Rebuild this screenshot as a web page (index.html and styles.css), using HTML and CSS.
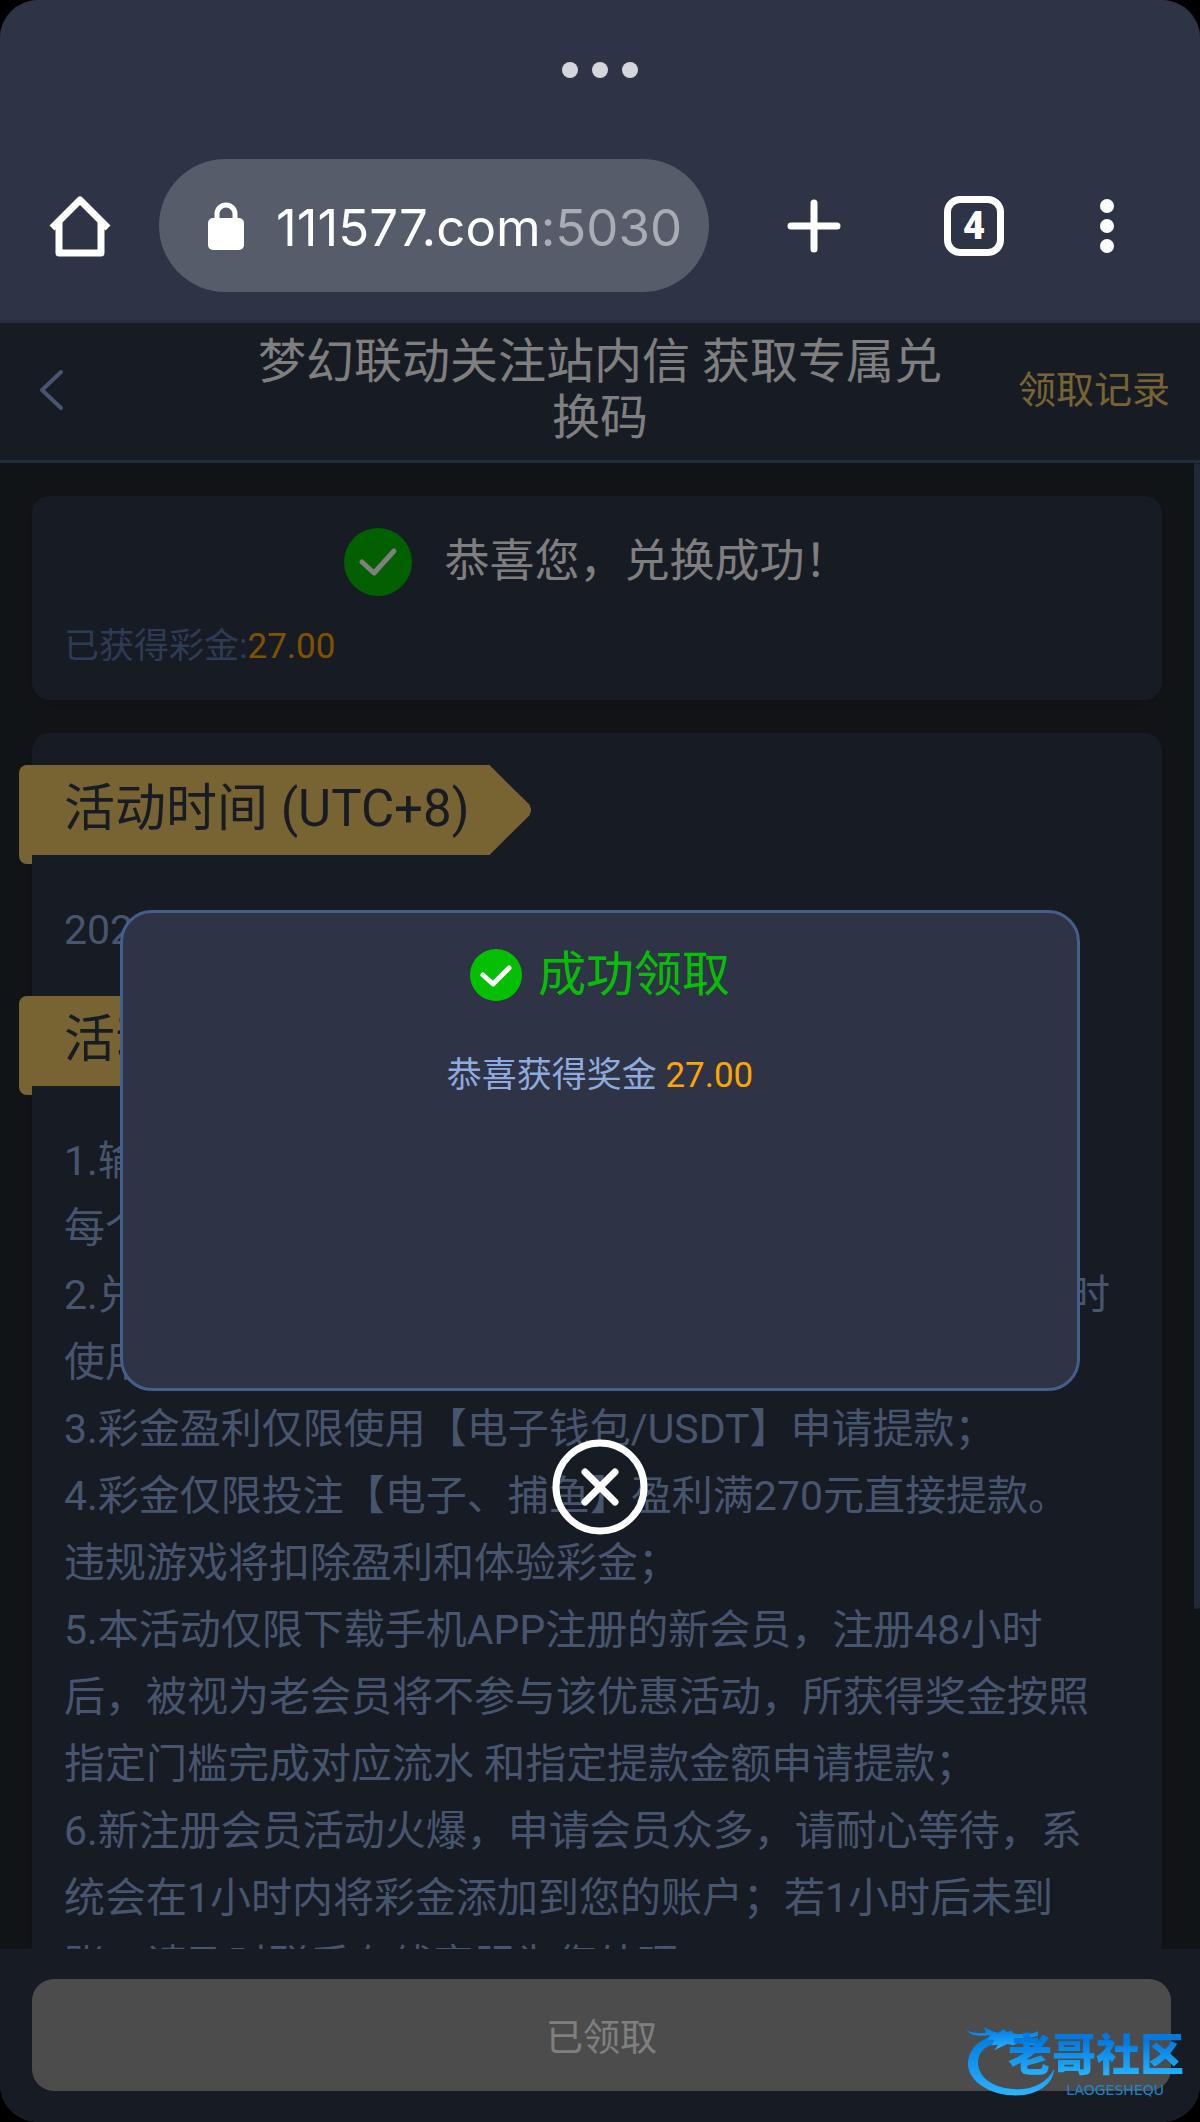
FILE: index.html
```html
<!DOCTYPE html>
<html lang="zh-CN">
<head>
    <meta charset="UTF-8">
    <meta name="viewport" content="width=device-width, initial-scale=1.0">
    <title>梦幻联动关注站内信</title>
    <link rel="stylesheet" href="styles.css">
</head>
<body>
    <div class="screen">
        <!-- browser toolbar -->
        <div class="browser">
            <div class="status-dots"><span></span><span></span><span></span></div>
            <div class="toolbar">
                <button class="icon-button home" aria-label="主页">
                    <svg width="64" height="68" viewBox="0 0 64 68" fill="none" stroke="#fff" stroke-width="7" stroke-linejoin="round" stroke-linecap="butt">
                        <path d="M4 36 L32 8 L60 36"/>
                        <path d="M11 30 V61 H53 V30"/>
                    </svg>
                </button>
                <a class="address" href="#">
                    <svg width="36" height="50" viewBox="0 0 36 50">
                        <path d="M9 20 V13 a9 9 0 0 1 18 0 V20" fill="none" stroke="#fff" stroke-width="5"/>
                        <rect x="0" y="17" width="36" height="32" rx="5" fill="#fff"/>
                    </svg>
                    <span class="url">111577.com<span class="port">:5030</span></span>
                </a>
                <div class="tools">
                    <button class="icon-button" aria-label="新标签页">
                        <svg width="54" height="54" viewBox="0 0 54 54" stroke="#fff" stroke-width="7" stroke-linecap="round">
                            <path d="M27 4 V50 M4 27 H50"/>
                        </svg>
                    </button>
                    <button class="tab-count" aria-label="标签页">4</button>
                    <button class="icon-button" aria-label="菜单">
                        <svg width="16" height="54" viewBox="0 0 16 54" fill="#fff">
                            <circle cx="8" cy="7" r="7"/>
                            <circle cx="8" cy="27" r="7"/>
                            <circle cx="8" cy="47" r="7"/>
                        </svg>
                    </button>
                </div>
            </div>
        </div>

        <div class="page">
            <header class="header">
                <button class="icon-button back" aria-label="返回">
                    <svg width="26" height="42" viewBox="0 0 26 42" fill="none" stroke="#8eaade" stroke-width="4" stroke-linecap="round" stroke-linejoin="round">
                        <path d="M23 3 L4 21 L23 39"/>
                    </svg>
                </button>
                <h1>梦幻联动关注站内信 获取专属兑换码</h1>
                <a class="record" href="#">领取记录</a>
            </header>

            <div class="content">
                <main class="list">
                    <section class="card result">
                        <div class="result-title">
                            <svg width="68" height="68" viewBox="0 0 68 68">
                                <circle cx="34" cy="34" r="34" fill="#04c002"/>
                                <path d="M18 34 L30 45 L50 23" fill="none" stroke="#fff" stroke-width="5" stroke-linecap="round" stroke-linejoin="round"/>
                            </svg>
                            <span>恭喜您，兑换成功！</span>
                        </div>
                        <p>已获得彩金:<span class="amount">27.00</span></p>
                    </section>

                    <section class="card rules">
                        <h2 class="ribbon">活动时间 (UTC+8)</h2>
                        <p>2024/01/01 00:00:00 ~ 2024/12/31 23:59:59</p>
                        <h2 class="ribbon">活动规则说明</h2>
                        <p>
                            1.输入兑换码即可领取专属彩金，<br>
                            每个会员仅限领取一次；<br>
                            2.兑换成功后彩金可在游戏大厅中查看，有效期为168小时使用，逾期自动失效；<br>
                            3.彩金盈利仅限使用【电子钱包/USDT】申请提款；<br>
                            4.彩金仅限投注【电子、捕鱼】盈利满270元直接提款。<br>
                            违规游戏将扣除盈利和体验彩金；<br>
                            5.本活动仅限下载手机APP注册的新会员，注册48小时后，被视为老会员将不参与该优惠活动，所获得奖金按照指定门槛完成对应流水 和指定提款金额申请提款；<br>
                            6.新注册会员活动火爆，申请会员众多，请耐心等待，系统会在1小时内将彩金添加到您的账户；若1小时后未到账，请及时联系在线客服为您处理。
                        </p>
                    </section>
                </main>
                <div class="scrollbar"></div>
            </div>

            <footer class="footer">
                <button class="claim">已领取</button>
            </footer>

            <!-- success dialog -->
            <div class="overlay">
                <div class="dialog" role="dialog">
                    <div class="dialog-title">
                        <svg width="52" height="52" viewBox="0 0 52 52">
                            <circle cx="26" cy="26" r="26" fill="#05c002"/>
                            <path d="M13 26 L23 35 L39 19" fill="none" stroke="#fff" stroke-width="5" stroke-linecap="round" stroke-linejoin="round"/>
                        </svg>
                        <span>成功领取</span>
                    </div>
                    <p>恭喜获得奖金 <span class="amount">27.00</span></p>
                </div>
                <button class="icon-button" aria-label="关闭">
                    <svg width="96" height="96" viewBox="0 0 96 96" fill="none" stroke="#fff" stroke-width="7" stroke-linecap="round">
                        <circle cx="48" cy="48" r="44"/>
                        <path d="M33 33 L63 63 M63 33 L33 63"/>
                    </svg>
                </button>
            </div>
        </div>

        <div class="watermark">
            <svg width="94" height="78" viewBox="0 0 282 234">
                <defs>
                    <linearGradient id="blue" x1="0" y1="0" x2="0" y2="1">
                        <stop offset="0" stop-color="#0079e0"/>
                        <stop offset="1" stop-color="#29b4ff"/>
                    </linearGradient>
                </defs>
                <g fill="url(#blue)">
                    <path d="M98 46 C40 58 12 92 12 134 C14 182 74 222 142 226 C214 230 268 196 271 146 C250 186 206 210 156 208 C92 206 44 176 42 130 C42 98 62 74 112 66 Z"/>
                    <path d="M8 30 C22 40 44 40 66 38 L60 22 C76 28 90 38 104 38 L118 28 L128 36 L142 32 L148 40 C166 44 184 42 204 40 L222 34 L222 48 L206 52 L188 54 L216 62 L214 74 L190 74 L164 66 L150 76 L130 72 L92 90 L102 74 L82 76 L92 60 L70 58 L78 46 C50 48 20 50 8 30 Z"/>
                </g>
                <path d="M92 12 Q106 26 142 26 M144 6 C180 6 224 10 218 32" fill="none" stroke="#4a5660" stroke-width="2"/>
            </svg>
            <div class="watermark-text">
                <strong>老哥社区</strong>
                <small>LAOGESHEQU</small>
            </div>
        </div>
    </div>
</body>
</html>
```
FILE: styles.css
```css
* {
    box-sizing: border-box;
}
body {
    margin: 0;
    background-color: #000;
    font-family: Roboto, 'Noto Sans CJK SC', sans-serif;
    color: #fff;
}
h1, h2, p {
    margin: 0;
    font-weight: normal;
}
a {
    color: inherit;
    text-decoration: none;
}
svg {
    display: block;
    flex-shrink: 0;
}
button {
    border: none;
    padding: 0;
    color: inherit;
    font-family: inherit;
    cursor: pointer;
}
.icon-button {
    background: none;
}
.screen {
    position: relative;
    display: flex;
    flex-direction: column;
    height: 100vh;
    border-radius: 38px;
    overflow: hidden;
    background-color: #23282f;
}

/* browser */
.browser {
    background-color: #2e3346;
    border-bottom: 3px solid #262e3d;
    padding-bottom: 28px;
}
.status-dots {
    display: flex;
    justify-content: center;
    gap: 14px;
    padding: 62px 0 81px;
}
.status-dots span {
    width: 16px;
    height: 16px;
    border-radius: 50%;
    background-color: #d5d6da;
}
.toolbar {
    display: flex;
    align-items: center;
    padding: 0 85px 0 48px;
}
.address {
    display: flex;
    align-items: center;
    gap: 32px;
    width: 550px;
    height: 133px;
    margin-left: 47px;
    padding-left: 49px;
    border-radius: 67px;
    background-color: #575c6a;
    font-family: Inter, Roboto, sans-serif;
    font-size: 51px;
    white-space: nowrap;
}
.url {
    padding-top: 4px;
}
.port {
    color: #a9acb5;
}
.tools {
    flex: 1;
    display: flex;
    align-items: center;
    justify-content: space-between;
    padding-left: 78px;
}
.tab-count {
    width: 60px;
    height: 60px;
    margin-left: 8px;
    border: 7px solid #fff;
    border-radius: 16px;
    background: none;
    font-size: 38px;
    font-weight: 900;
    line-height: 46px;
}

/* page */
.page {
    position: relative;
    flex: 1;
    min-height: 0;
    display: flex;
    flex-direction: column;
}
.header {
    display: grid;
    grid-template-columns: 1fr 700px 1fr;
    align-items: center;
    padding: 11px 30px 14px;
    background-color: #2e3646;
    border-bottom: 3px solid #44557a;
}
.header h1 {
    font-size: 48px;
    line-height: 56px;
    text-align: center;
}
.back {
    justify-self: start;
    padding-left: 8px;
}
.record {
    justify-self: end;
    padding-bottom: 8px;
    color: #f0c866;
    font-size: 38px;
}
.content {
    flex: 1;
    min-height: 0;
    display: flex;
    overflow: hidden;
}
.list {
    flex: 1;
    padding: 33px 32px;
}
.scrollbar {
    width: 6px;
    height: 1146px;
    border-radius: 3px;
    background-color: #3e4e70;
}
.card {
    border-radius: 18px;
    padding: 32px;
    background-color: #2e3646;
    box-shadow: 0 4px 16px rgba(0,0,0,0.1);
}
.result {
    margin-bottom: 33px;
}
.result-title {
    display: flex;
    align-items: center;
    justify-content: center;
    gap: 32px;
    margin-bottom: 30px;
    font-size: 45px;
    line-height: 68px;
}
.result p {
    color: #5c77a9;
    font-size: 35px;
    line-height: 42px;
}
.amount {
    color: #ffa500;
}
.rules p {
    color: #8eaade;
    font-size: 41px;
    line-height: 67px;
    padding: 42px 16px 32px 0;
}
.ribbon {
    position: relative;
    width: max-content;
    height: 90px;
    margin-left: -45px;
    padding: 0 21px 0 45px;
    border-radius: 8px 0 0 0;
    background-color: #f0c866;
    color: #2e3646;
    font-size: 51px;
    line-height: 88px;
}
.ribbon::before {
    content: '';
    position: absolute;
    left: 0;
    top: 100%;
    width: 13px;
    height: 9px;
    border-radius: 0 0 0 8px;
    background-color: #f0c866;
}
.ribbon::after {
    content: '';
    position: absolute;
    left: 100%;
    top: 0;
    width: 42px;
    height: 90px;
    margin-left: -1px;
    background-color: #f0c866;
    clip-path: polygon(0 0, 95% 44%, 100% 50%, 95% 56%, 0 100%);
}
.footer {
    padding: 30px 29px 31px 32px;
    background-color: #2e3646;
}
.claim {
    display: block;
    width: 100%;
    height: 112px;
    border-radius: 22px;
    background-color: #999;
    font-size: 37px;
}

/* dialog */
.overlay {
    position: absolute;
    inset: 0;
    display: flex;
    flex-direction: column;
    align-items: center;
    justify-content: center;
    gap: 48px;
    background-color: rgba(0,0,0,0.5);
}
.dialog {
    width: 80%;
    min-height: 481px;
    padding: 32px;
    border: 3px solid #445f8b;
    border-radius: 32px;
    background-color: #2e3346;
    text-align: center;
}
.dialog-title {
    display: flex;
    align-items: center;
    justify-content: center;
    gap: 16px;
    margin-bottom: 46px;
    color: #05c002;
    font-size: 48px;
    line-height: 60px;
}
.dialog p {
    color: #8eaade;
    font-size: 35px;
    line-height: 50px;
}

/* watermark */
.watermark {
    position: absolute;
    right: 16px;
    bottom: 24px;
    display: flex;
    align-items: flex-end;
}
.watermark-text {
    margin-left: -50px;
    display: flex;
    flex-direction: column;
    align-items: flex-end;
}
.watermark strong {
    font-size: 44px;
    font-weight: 900;
    line-height: 52px;
    background: linear-gradient(#0079e0 20%, #29b4ff 90%);
    -webkit-background-clip: text;
    background-clip: text;
    color: transparent;
}
.watermark small {
    color: #1d86cc;
    font-family: 'DejaVu Sans', sans-serif;
    font-size: 14px;
    line-height: 16px;
    padding-right: 20px;
}
```
